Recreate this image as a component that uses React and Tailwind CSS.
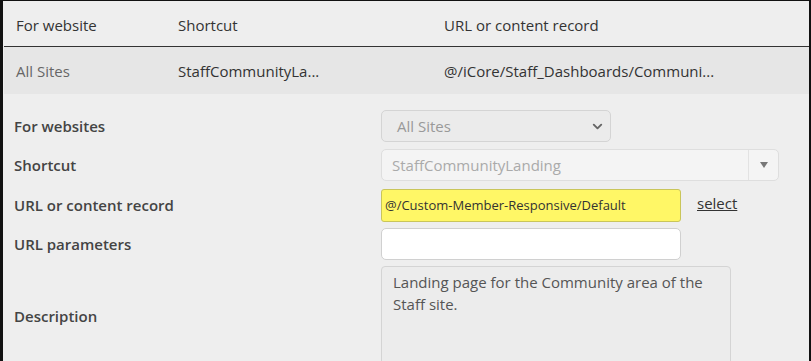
import React from 'react';
import { ChevronDown } from 'lucide-react';

const font = { fontFamily: '"Open Sans", "Liberation Sans", sans-serif' };

const FormRow = ({ label, children, className = '' }) => (
  <div className={`flex items-center ${className}`}>
    <div className="w-[367px] shrink-0 text-[15px] font-semibold text-[#444]">{label}</div>
    {children}
  </div>
);

export default function App() {
  return (
    <div
      className="w-[811px] h-[361px] overflow-hidden bg-[#eeeeee] border-t border-l-[3px] border-r-2 border-[#111]"
      style={font}
    >
      {/* Table header */}
      <div className="h-[46px] pt-[3px] flex items-center border-b border-[#333] ml-px text-[15px] text-[#333]">
        <div className="w-[174px] pl-[12px]">For website</div>
        <div className="w-[266px]">Shortcut</div>
        <div>URL or content record</div>
      </div>

      {/* Table row */}
      <div className="h-[47px] pt-[1px] flex items-center bg-[#e6e6e6] ml-px text-[15px]">
        <div className="w-[174px] pl-[12px] text-[#666]">All Sites</div>
        <div className="w-[266px] text-[#333]">StaffCommunityLa...</div>
        <div className="text-[#333]">@/iCore/Staff_Dashboards/Communi...</div>
      </div>

      {/* Detail form */}
      <div className="pl-[11px] pt-[16px] flex flex-col">
        <FormRow label="For websites">
          <div className="w-[230px] h-[32px] rounded-[5px] border border-[#d4d4d4] bg-[#ebebeb] flex items-center justify-between pl-[15px] pr-[5px]">
            <span className="text-[15px] text-[#999]">All Sites</span>
            <ChevronDown size={15} strokeWidth={3} className="text-[#666]" />
          </div>
        </FormRow>

        <FormRow label="Shortcut" className="mt-[7px]">
          <div className="w-[398px] h-[32px] rounded-[5px] border border-[#dedede] bg-[#f4f4f4] flex items-stretch">
            <div className="flex-1 flex items-center pl-[10px] text-[15px] text-[#aaa]">StaffCommunityLanding</div>
            <div className="w-[30px] border-l border-[#e2e2e2] flex items-center justify-center">
              <svg width="8" height="6" viewBox="0 0 8 6">
                <path d="M0 0 L8 0 L4 6 Z" fill="#777" />
              </svg>
            </div>
          </div>
        </FormRow>

        <FormRow label="URL or content record" className="mt-[8px]">
          <div className="w-[300px] h-[33px] rounded-[3px] border border-[#c9c55a] bg-[#fff766] flex items-center pl-[3px] text-[13px] text-[#333]">
            @/Custom-Member-Responsive/Default
          </div>
          <a className="ml-[16px] text-[15px] text-[#333] underline -mt-[4px]">select</a>
        </FormRow>

        <FormRow label="URL parameters" className="mt-[6px]">
          <div className="w-[300px] h-[32px] rounded-[5px] border border-[#d0d0d0] bg-white" />
        </FormRow>

        <FormRow label="Description" className="mt-[6px]">
          <div className="w-[350px] h-[100px] rounded-[4px] border border-[#d4d4d4] bg-[#ececec] pl-[11px] pr-[8px] pt-[4px] text-[15px] leading-[22px] text-[#555]">
            Landing page for the Community area of the Staff site.
          </div>
        </FormRow>
      </div>
    </div>
  );
}
